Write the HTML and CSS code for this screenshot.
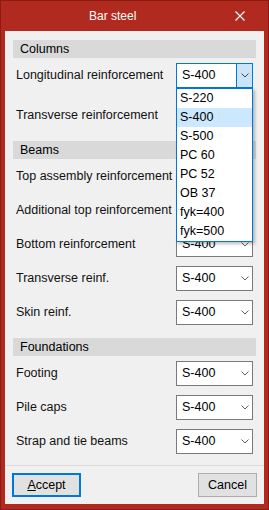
FILE: index.html
```html
<!DOCTYPE html>
<html>
<head>
  <title>Bar steel</title>
  <link rel="stylesheet" href="styles.css">
</head>
<body>
  <div class="window">
    <div class="titlebar">
      <span class="title">Bar steel</span>
      <span class="close">
        <svg width="10" height="10" viewBox="0 0 10 10"><path d="M0.5 0.5 L9.5 9.5 M9.5 0.5 L0.5 9.5" stroke="#fff" stroke-width="1.2" fill="none"/></svg>
      </span>
    </div>
    <div class="client">
      <div class="content">
        <div class="section">
          <div class="band">Columns</div>
          <div class="row">
            <span class="label">Longitudinal reinforcement</span>
            <div class="combo focused">
              <span class="value">S-400</span>
              <span class="arrow"><svg width="8" height="5" viewBox="0 0 8 5"><path d="M0.5 0.5 L4 4 L7.5 0.5" stroke="#444" fill="none"/></svg></span>
              <ul class="list">
                <li>S-220</li>
                <li class="sel">S-400</li>
                <li>S-500</li>
                <li>PC 60</li>
                <li>PC 52</li>
                <li>OB 37</li>
                <li>fyk=400</li>
                <li>fyk=500</li>
              </ul>
            </div>
          </div>
          <div class="row second">
            <span class="label">Transverse reinforcement</span>
            <div class="combo covered"><span class="value">S-400</span><span class="arrow"></span></div>
          </div>
        </div>
        <div class="section">
          <div class="band">Beams</div>
          <div class="row">
            <span class="label">Top assembly reinforcement</span>
            <div class="combo covered"><span class="value">S-400</span><span class="arrow"></span></div>
          </div>
          <div class="row">
            <span class="label">Additional top reinforcement</span>
            <div class="combo covered"><span class="value">S-400</span><span class="arrow"></span></div>
          </div>
          <div class="row">
            <span class="label">Bottom reinforcement</span>
            <div class="combo"><span class="value">S-400</span><span class="arrow"><svg width="8" height="5" viewBox="0 0 8 5"><path d="M0.5 0.5 L4 4 L7.5 0.5" stroke="#606060" fill="none"/></svg></span></div>
          </div>
          <div class="row">
            <span class="label">Transverse reinf.</span>
            <div class="combo"><span class="value">S-400</span><span class="arrow"><svg width="8" height="5" viewBox="0 0 8 5"><path d="M0.5 0.5 L4 4 L7.5 0.5" stroke="#606060" fill="none"/></svg></span></div>
          </div>
          <div class="row">
            <span class="label">Skin reinf.</span>
            <div class="combo"><span class="value">S-400</span><span class="arrow"><svg width="8" height="5" viewBox="0 0 8 5"><path d="M0.5 0.5 L4 4 L7.5 0.5" stroke="#606060" fill="none"/></svg></span></div>
          </div>
        </div>
        <div class="section">
          <div class="band">Foundations</div>
          <div class="row">
            <span class="label">Footing</span>
            <div class="combo"><span class="value">S-400</span><span class="arrow"><svg width="8" height="5" viewBox="0 0 8 5"><path d="M0.5 0.5 L4 4 L7.5 0.5" stroke="#606060" fill="none"/></svg></span></div>
          </div>
          <div class="row">
            <span class="label">Pile caps</span>
            <div class="combo"><span class="value">S-400</span><span class="arrow"><svg width="8" height="5" viewBox="0 0 8 5"><path d="M0.5 0.5 L4 4 L7.5 0.5" stroke="#606060" fill="none"/></svg></span></div>
          </div>
          <div class="row">
            <span class="label">Strap and tie beams</span>
            <div class="combo"><span class="value">S-400</span><span class="arrow"><svg width="8" height="5" viewBox="0 0 8 5"><path d="M0.5 0.5 L4 4 L7.5 0.5" stroke="#606060" fill="none"/></svg></span></div>
          </div>
        </div>
      </div>
      <div class="footer">
        <button class="btn default"><u>A</u>ccept</button>
        <button class="btn">Cancel</button>
      </div>
    </div>
  </div>
</body>
</html>
```

FILE: styles.css
```css
body { margin: 0; font-family: "Liberation Sans", Arial, sans-serif; font-size: 12px; color: #000; }
.window { width: 269px; height: 510px; box-sizing: border-box; background: #b02a1f; border: 1px solid #8c1b13; display: flex; flex-direction: column; }
.titlebar { height: 30px; display: flex; align-items: center; position: relative; }
.title { color: #fff; margin-left: 88px; font-size: 12px; }
.close { margin-left: auto; margin-right: 23px; width: 10px; height: 10px; display: flex; }
.client { margin: 0 4px 5px 4px; flex: 1; background: #f0f0f0; display: flex; flex-direction: column; }
.content { flex: 1; padding: 0 8px; }
.section { margin-top: 9px; }
.band { height: 18px; line-height: 18px; background: #d9d9d9; padding-left: 7px; font-size: 12.5px; }
.row { height: 34px; display: flex; align-items: center; padding: 0 3px; }
.row.second { margin-top: 6px; }
.label { flex: 1; font-size: 12.5px; color: #111; }
.combo { position: relative; width: 75px; height: 23px; border: 1px solid #7a7a7a; background: #fff; display: flex; align-items: center; }
.combo .value { flex: 1; padding-left: 5px; font-size: 12.5px; }
.combo .arrow { width: 15px; height: 100%; display: flex; align-items: center; justify-content: center; }
.combo.covered .value { visibility: hidden; }
.combo.focused { border-color: #0078d7; }
.combo.focused .arrow { background: #cce4f7; border-left: 1px solid #0078d7; }
.list { position: absolute; left: -1px; top: 24px; width: 75px; margin: 0; padding: 0; list-style: none; background: #fff; border: 1px solid #0078d7; box-shadow: 2px 2px 3px rgba(0,0,0,0.25); z-index: 2; }
.list li { height: 19px; line-height: 19px; padding-left: 3px; font-size: 12.5px; }
.list li.sel { background: #cce8ff; }
.footer { border-top: 1px solid #dcdcdc; padding: 7px; display: flex; justify-content: space-between; }
.btn { height: 24px; background: #e1e1e1; border: 1px solid #adadad; font-family: inherit; font-size: 12.5px; padding: 0; width: 59px; }
.btn.default { width: 69px; border: 2px solid #0078d7; }
```
